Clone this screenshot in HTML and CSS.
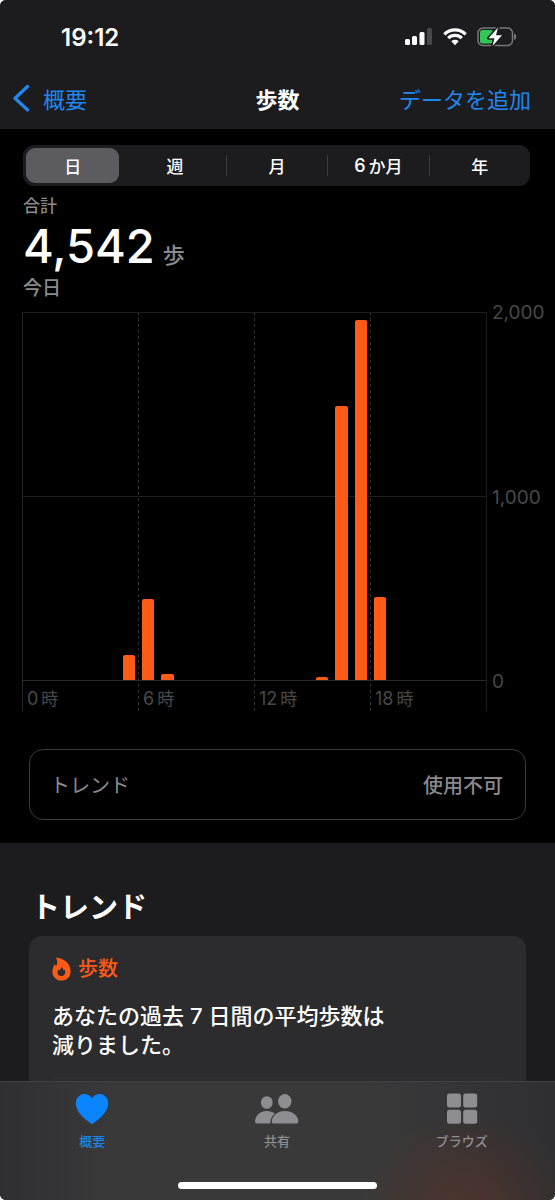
FILE: index.html
```html
<!DOCTYPE html>
<html lang="ja">
<head>
<meta charset="utf-8">
<meta name="viewport" content="width=device-width, initial-scale=1">
<title>歩数</title>
<link rel="stylesheet" href="styles.css">
</head>
<body>
<div class="screen">
  <header class="header">
    <div class="status">
      <time class="clock">19:12</time>
      <div class="status-icons">
        <svg width="29" height="20" viewBox="0 0 29 20" aria-hidden="true">
          <g fill="#fff"><rect x="1" y="12" width="5" height="6" rx="1.5"/><rect x="8" y="9" width="5" height="9" rx="1.5"/><rect x="15.500" y="5" width="5" height="13" rx="1.500"/></g>
          <rect x="23" y="1" width="5" height="17" rx="1.5" fill="#48484a"/>
        </svg>
        <svg width="24" height="20" viewBox="0 0 24 20" aria-hidden="true">
          <g fill="none" stroke="#fff" stroke-width="3.200"><path d="M1.300 7.300A15.200 15.200 0 0 1 22.700 7.300"/><path d="M5.200 11.200A9.700 9.700 0 0 1 18.800 11.200"/></g>
          <path d="M8.300 14.200a5.400 5.400 0 0 1 7.400 0L12 18.200z" fill="#fff"/>
        </svg>
        <svg width="40" height="22" viewBox="0 0 40 22" aria-hidden="true">
          <rect x="1" y="2" width="34.500" height="17.500" rx="5" fill="none" stroke="#77777a" stroke-width="1.500"/>
          <path d="M37 7.500q2.300 1 2.300 3.200T37 14z" fill="#77777a"/>
          <rect x="3" y="4" width="13" height="13.500" rx="2.500" fill="#30c758"/>
          <path d="M21 1.500L11.500 12.200h6L15.500 20 25 9.300h-6z" fill="#fff" stroke="#1c1c1e" stroke-width="3" stroke-linejoin="round" paint-order="stroke"/>
        </svg>
      </div>
    </div>
    <nav class="navbar">
      <a class="back" href="#summary">
        <svg width="18" height="28" viewBox="0 0 18 28" aria-hidden="true"><path d="M15.500 2.500L3 14.200l12.500 11.700" fill="none" stroke="#1f87ee" stroke-width="3.300" stroke-linecap="round" stroke-linejoin="round"/></svg>
        概要</a>
      <h1 class="title">歩数</h1>
      <button class="add" type="button">データを追加</button>
    </nav>
  </header>

  <main class="content">
    <section class="steps">
      <div class="segments">
        <button class="segment selected" type="button" aria-pressed="true">日</button>
        <button class="segment" type="button">週</button>
        <button class="segment divided" type="button">月</button>
        <button class="segment divided" type="button"><span class="digits">6</span>か月</button>
        <button class="segment divided" type="button">年</button>
      </div>
      <div class="summary">
        <p class="caption">合計</p>
        <p class="total"><span class="number">4,542</span><span class="unit">歩</span></p>
        <p class="date">今日</p>
      </div>
      <div class="chart">
        <div class="plot">
          <div class="quarter first"><span class="digits">0</span>時</div>
          <div class="quarter"><span class="digits">6</span>時</div>
          <div class="quarter"><span class="digits">12</span>時</div>
          <div class="quarter"><span class="digits">18</span>時</div>
          <div class="bars">
            <span class="bar" style="grid-column:6;height:6.8%"></span>
            <span class="bar" style="grid-column:7;height:22.200%"></span>
            <span class="bar" style="grid-column:8;height:1.600%"></span>
            <span class="bar" style="grid-column:16;height:0.900%"></span>
            <span class="bar" style="grid-column:17;height:74.700%"></span>
            <span class="bar" style="grid-column:18;height:98.200%"></span>
            <span class="bar" style="grid-column:19;height:22.600%"></span>
          </div>
        </div>
        <div class="scale"><span>2,000</span><span>1,000</span><span>0</span></div>
      </div>
      <button class="trend-row" type="button"><span>トレンド</span><span class="trend-state">使用不可</span></button>
    </section>

    <section class="trends">
      <h2 class="heading">トレンド</h2>
      <article class="card">
        <h3 class="card-title">
          <svg width="19" height="24" viewBox="0 0 19 24" aria-hidden="true"><path fill="#ff5a16" fill-rule="evenodd" d="M3.800.400C11.500.900 18.600 6 18.600 14.300c0 5.600-3.800 9.300-9.100 9.300S.400 19.900.400 14.800c0-3.300 1.200-5.300 2-7.500.700.700 1.200 1.100 1.900 1.600C5.700 6.200 5.600 3 3.800.400zM9 9.800c.2 1.900-.6 2.700-1.500 3.600-.4-.2-.5-.4-.7-.8-1 1.200-1.300 2.100-1.300 3 0 2 1.600 3.400 3.900 3.400s3.900-1.400 3.900-3.700c0-1.100-.3-1.900-.9-2.700-.3.500-.5.700-.9.900C11.200 11.900 10.400 10.600 9 9.800z"/></svg>
          歩数</h3>
        <p class="card-text">あなたの過去<span class="inner-digit">7</span>日間の平均歩数は<br>減りました。</p>
        <hr class="rule">
      </article>
    </section>
  </main>

  <footer class="footer">
    <nav class="tabs">
      <a class="tab active" href="#summary">
        <svg width="46" height="34" viewBox="0 0 46 34" aria-hidden="true"><path fill="#0a84ff" d="M23 32.200C17 28 6.800 20.500 6.800 11.500 6.800 6 10.500 2 15.300 2 18.700 2 21.400 3.700 23 6.500 24.600 3.700 27.300 2 30.700 2c4.800 0 8.500 4 8.500 9.500C39.200 20.500 29 28 23 32.200z"/></svg>
        概要</a>
      <a class="tab" href="#sharing">
        <svg width="46" height="34" viewBox="0 0 46 34" aria-hidden="true"><g fill="#8e8e90"><ellipse cx="12.800" cy="10.500" rx="5.900" ry="6.300"/><path d="M3 31.500Q1 31.500 1 29.500C1.500 23.500 6 19 12.800 19q5 0 8 2.800Q16.500 25 16.300 31.500z"/><ellipse cx="30.800" cy="9.300" rx="6.700" ry="7.300"/><path d="M19.500 31.500q-2 0-1.700-2.300C18.500 23.500 23.500 19 31 19s12.800 4.500 13.400 10.200q.300 2.300-1.700 2.300z"/></g></svg>
        共有</a>
      <a class="tab" href="#browse">
        <svg width="46" height="34" viewBox="0 0 46 34" aria-hidden="true"><g fill="#8e8e90"><rect x="8" y="1.500" width="14" height="14" rx="2.500"/><rect x="24.200" y="1.500" width="14" height="14" rx="2.500"/><rect x="8" y="17.700" width="14" height="14" rx="2.500"/><rect x="24.200" y="17.700" width="14" height="14" rx="2.500"/></g></svg>
        ブラウズ</a>
    </nav>
    <div class="home-indicator"></div>
  </footer>
</div>
</body>
</html>
```
FILE: styles.css
```css
* { box-sizing: border-box; }
body { margin: 0; background: #fff; }
h1, h2, h3, p { margin: 0; }
button { font: inherit; color: inherit; border: 0; padding: 0; background: none; }
a { text-decoration: none; color: inherit; }
svg { display: block; flex: none; }

.screen {
  display: flex;
  flex-direction: column;
  height: 100vh;
  overflow: hidden;
  border-radius: 6px;
  background: #1c1c1e;
  color: #fff;
  font-family: Inter, "Noto Sans CJK JP", sans-serif;
}

.header { flex: none; background: #1c1c1e; }
.status {
  display: flex;
  align-items: center;
  justify-content: space-between;
  height: 72px;
  padding: 2px 38px 0 61px;
}
.clock { font-size: 24px; font-weight: 600; }
.status-icons { display: flex; align-items: center; gap: 10px; }
.navbar {
  display: grid;
  grid-template-columns: 1fr auto 1fr;
  align-items: center;
  height: 57px;
  padding: 0 12px 6px;
  font-size: 22px;
  color: #1f87ee;
}
.back { display: flex; align-items: center; gap: 13px; }
.title { font-size: 22px; font-weight: 700; color: #fff; }
.add { justify-self: end; margin-right: 12px; }

.content { flex: 1; min-height: 0; overflow: hidden; }
.steps { padding: 16px 0 23px; background: #000; }
.segments {
  display: grid;
  grid-template-columns: repeat(5, 1fr);
  height: 41px;
  margin: 0 25px 0 23px;
  border-radius: 11px;
  background: #1c1c1e;
  font-size: 17px;
  font-weight: 500;
}
.segment { display: flex; align-items: center; justify-content: center; }
.segment.selected { margin: 3px 5px 3px 3px; border-radius: 9px; background: #5b5b60; }
.segment.divided::before { content: ""; width: 1px; height: 21px; margin-right: auto; background: #3c3c3f; }
.segment.divided::after { content: ""; margin-left: auto; }
.digits { margin-right: 3px; font-size: 18px; }

.summary { padding: 8px 23px 0; color: #8a8a8e; font-weight: 500; }
.caption { font-size: 17px; line-height: 24px; }
.total { display: flex; align-items: baseline; gap: 8px; height: 56px; line-height: 56px; }
.number { font-size: 47px; color: #fff; }
.unit { font-size: 22px; line-height: 54px; }
.date { padding-top: 2px; font-size: 19px; line-height: 26px; }

.chart {
  display: grid;
  grid-template-columns: 1fr 68px;
  margin-top: 10px;
  padding-left: 22px;
  color: #48484a;
  font-size: 17px;
}
.plot {
  display: grid;
  grid-template-columns: repeat(4, 1fr);
  grid-template-rows: 369px 30px;
  border-right: 1px solid #1e1e20;
}
.quarter {
  grid-row: 1 / 3;
  display: flex;
  align-items: flex-end;
  padding: 0 0 1px 5px;
  line-height: 22px;
  background: repeating-linear-gradient(#333335 0 3px, transparent 3px 6px) left / 1px 100% no-repeat;
}
.quarter.first { background: linear-gradient(#262628, #262628) left / 1px 100% no-repeat; }
.quarter:nth-child(1) { grid-column: 1; }
.quarter:nth-child(2) { grid-column: 2; }
.quarter:nth-child(3) { grid-column: 3; }
.quarter:nth-child(4) { grid-column: 4; }
.bars {
  grid-area: 1 / 1 / 2 / 5;
  display: grid;
  grid-template-columns: repeat(24, 1fr);
  align-items: end;
  border-top: 1px solid #1e1e20;
  border-bottom: 1px solid #2a2a2c;
  background: linear-gradient(#1e1e20, #1e1e20) center / 100% 1px no-repeat;
}
.bar { grid-row: 1; margin: 0 3px 0 4px; border-radius: 2px 2px 0 0; background: #ff5a16; }
.scale {
  display: flex;
  flex-direction: column;
  justify-content: space-between;
  height: 389px;
  margin-top: -9px;
  padding-left: 5px;
  font-size: 19px;
  line-height: 20px;
}

.trend-row {
  display: flex;
  align-items: center;
  justify-content: space-between;
  width: calc(100% - 58px);
  height: 71px;
  margin: 38px 29px 0;
  padding: 0 22px 0 20px;
  border: 1px solid #3a3a3c;
  border-radius: 14px;
  color: #8a8a8e;
  font-size: 20px;
}
.trend-state { font-weight: 500; }

.trends { padding: 44px 29px 0; background: #1c1c1e; }
.heading { padding-left: 2px; font-size: 29px; line-height: 42px; font-weight: 700; }
.card { height: 240px; margin-top: 7px; padding: 19px 23px; border-radius: 13px; background: #2c2c2e; }
.card-title {
  display: flex;
  align-items: center;
  gap: 7px;
  font-size: 20px;
  line-height: 28px;
  font-weight: 500;
  color: #ff5a16;
}
.card-text { margin-top: 19px; font-size: 22px; line-height: 29px; font-weight: 500; }
.inner-digit { margin: 0 6px; }
.rule { margin: 18px 0 0; border: 0; border-top: 1px solid #323234; }

.footer {
  flex: none;
  height: 119px;
  border-top: 1px solid #414143;
  background:
    radial-gradient(circle at 84% 118%, rgba(110, 52, 34, 0.5), transparent 110px),
    linear-gradient(90deg, #2f2f31, #39393a 20%, #39393a 66%, #2f2f31);
}
.tabs { display: grid; grid-template-columns: repeat(3, 1fr); height: 100px; padding-right: 1px; }
.tab {
  display: flex;
  flex-direction: column;
  align-items: center;
  padding-top: 10px;
  gap: 5px;
  color: #8e8e90;
  font-size: 13px;
  line-height: 20px;
  font-weight: 500;
}
.tab.active { color: #1c82e8; }
.home-indicator { width: 36%; height: 7px; margin: 0 auto; border-radius: 4px; background: #fff; }
```
